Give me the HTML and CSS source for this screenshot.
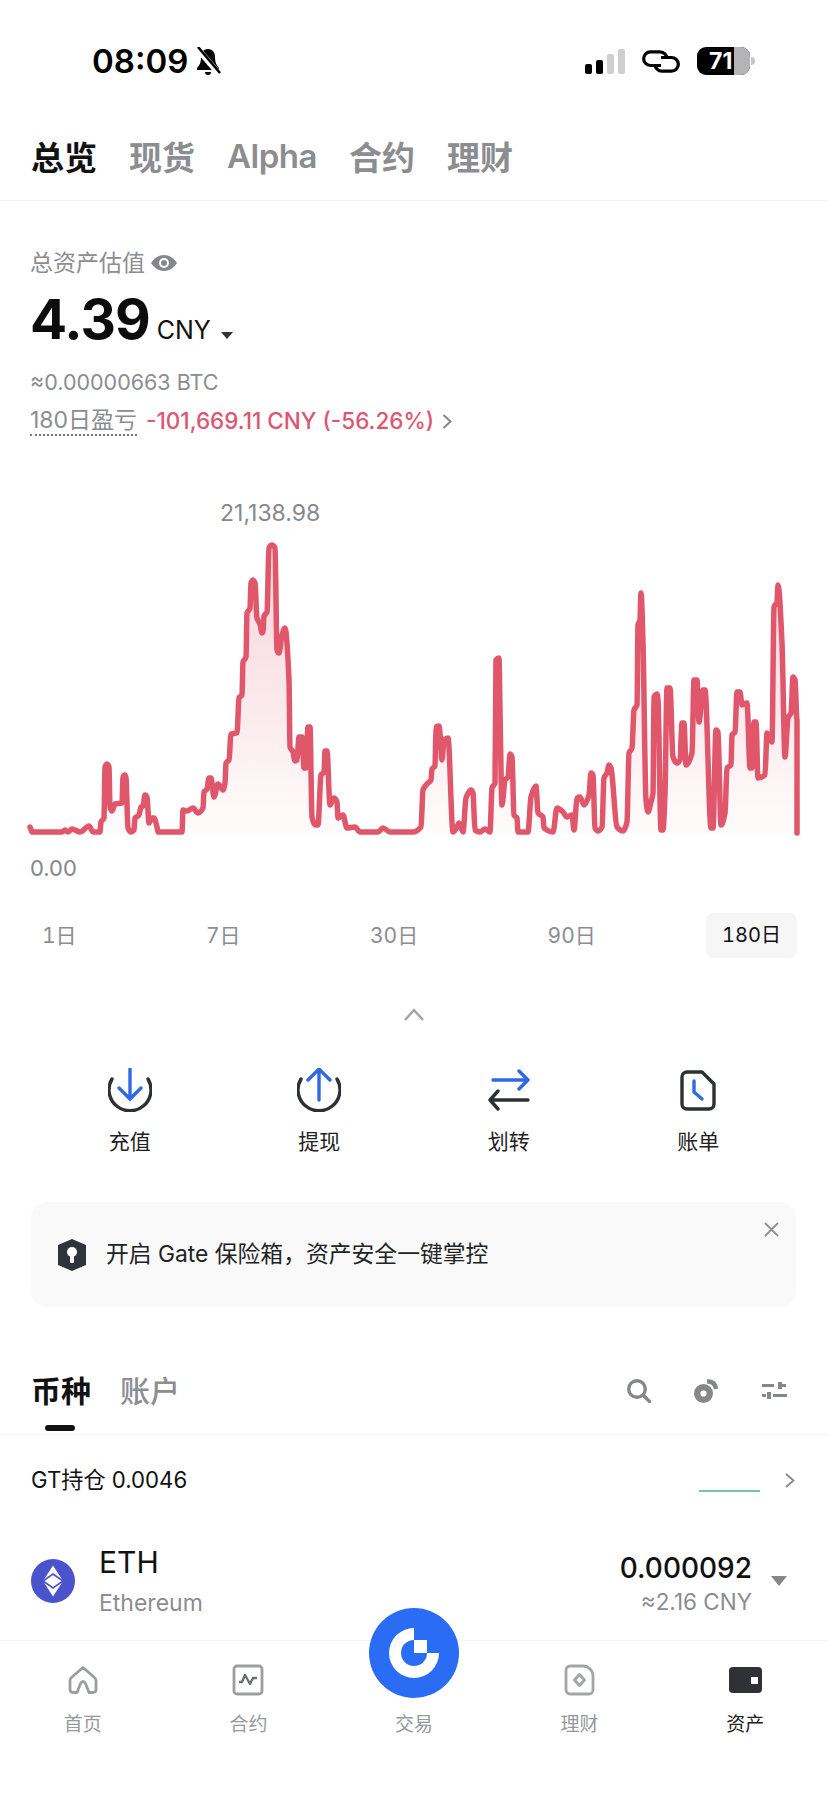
FILE: index.html
```html
<!DOCTYPE html>
<html lang="zh-CN">
  <head>
    <meta charset="UTF-8" />
    <meta name="viewport" content="width=device-width, initial-scale=1.0" />
    <title>资产</title>
    <link rel="stylesheet" href="styles.css">
  </head>
  <body>
    <div class="status">
      <span class="time">08:09</span>
      <svg class="bell" viewBox="0 0 26 28" width="26" height="28">
        <path d="M13 2c-5 0-7 4-7 8 0 5-1 8-4 11v2h22v-2c-3-3-4-6-4-11 0-4-2-8-7-8z" fill="#000"/>
        <path d="M10 25h6a3 3 0 0 1-6 0z" fill="#000"/>
        <path d="M2 1l22 26" stroke="#fff" stroke-width="6"/>
        <path d="M3 0l22 26" stroke="#000" stroke-width="2.6"/>
      </svg>
      <div class="status-right">
        <div class="signal">
          <i class="bar-1"></i><i class="bar-2"></i><i class="bar-3"></i><i class="bar-4"></i>
        </div>
        <svg class="link" viewBox="0 0 38 23" width="38" height="23" fill="none" stroke="#000" stroke-width="3.2">
          <path d="M19 15.500H8.500a6.800 6.800 0 0 1 0-13.700H18a7 7 0 0 1 7 7"/>
          <path d="M19 7.500h10.500a6.800 6.800 0 0 1 0 13.700H20a7 7 0 0 1-7-7"/>
        </svg>
        <div class="battery">
          <span class="battery-num">71</span>
          <i class="battery-rest"></i>
          <i class="battery-nub"></i>
        </div>
      </div>
    </div>

    <div class="tabs">
      <span class="active">总览</span>
      <span>现货</span>
      <span class="latin">Alpha</span>
      <span>合约</span>
      <span>理财</span>
    </div>

    <div class="summary">
      <div class="label">
        总资产估值
        <svg viewBox="0 0 26 16" width="26" height="16">
          <path d="M0 8c3-5 8-8 13-8s10 3 13 8c-3 5-8 8-13 8S3 13 0 8z" fill="#85878b"/>
          <circle cx="13" cy="8" r="5" fill="#fff"/>
          <circle cx="13" cy="8" r="3" fill="#85878b"/>
        </svg>
      </div>
      <div class="value">
        <b>4.39</b><span>CNY</span><i class="caret"></i>
      </div>
      <div class="btc">≈0.00000663 BTC</div>
      <div class="profit">
        <span class="profit-name">180日盈亏</span>
        <span class="profit-num">-101,669.11 CNY (-56.26%)</span>
        <svg viewBox="0 0 10 15" width="10" height="15" fill="none" stroke="#85878b" stroke-width="2">
          <path d="M1.500 1l7 6.500-7 6.500"/>
        </svg>
      </div>
    </div>

    <div class="chart-max">21,138.98</div>
    <svg class="chart" viewBox="0 528 828 310" width="828" height="310">
      <defs>
        <linearGradient id="area" gradientUnits="userSpaceOnUse" x1="0" y1="545" x2="0" y2="833">
          <stop offset="0" stop-color="#e0566a" stop-opacity="0.26"/>
          <stop offset="1" stop-color="#e0566a" stop-opacity="0.02"/>
        </linearGradient>
      </defs>
      <path class="area"></path>
      <path class="line"></path>
    </svg>
    <div class="chart-min">0.00</div>

    <div class="range">
      <span>1日</span>
      <span>7日</span>
      <span>30日</span>
      <span>90日</span>
      <span class="active">180日</span>
    </div>

    <svg class="fold" viewBox="0 0 20 13" width="20" height="13" fill="none" stroke="#a3a5a8" stroke-width="2.500">
      <path d="M1 12l9-10 9 10"/>
    </svg>

    <div class="actions">
      <div class="action">
        <svg viewBox="0 0 44 44" width="44" height="44" fill="none" stroke-width="3.400" stroke-linecap="round">
          <path d="M4 11a21 21 0 1 0 36 0" stroke="#2d3035"/>
          <path d="M22 1v30M11 20l11 11 11-11" stroke="#2f69e6"/>
        </svg>
        <span>充值</span>
      </div>
      <div class="action">
        <svg viewBox="0 0 44 44" width="44" height="44" fill="none" stroke-width="3.400" stroke-linecap="round">
          <path d="M4 11a21 21 0 1 0 36 0" stroke="#2d3035"/>
          <path d="M22 32V2M11 12L22 1l11 11" stroke="#2f69e6"/>
        </svg>
        <span>提现</span>
      </div>
      <div class="action">
        <svg viewBox="0 0 42 44" width="42" height="44" fill="none" stroke-width="3.400" stroke-linecap="round" stroke-linejoin="round">
          <path d="M5 12h35M31 3l9 9-9 9" stroke="#2f69e6"/>
          <path d="M40 32H2M10 23l-8 9 8 9" stroke="#2d3035"/>
        </svg>
        <span>划转</span>
      </div>
      <div class="action">
        <svg viewBox="0 0 38 44" width="38" height="44" fill="none" stroke-width="3.400" stroke-linecap="round" stroke-linejoin="round">
          <path d="M8 4h15l12 12v20a5 5 0 0 1-5 5H8a5 5 0 0 1-5-5V9a5 5 0 0 1 5-5z" stroke="#2d3035"/>
          <path d="M15 13v11l8 7" stroke="#2f69e6"/>
        </svg>
        <span>账单</span>
      </div>
    </div>

    <div class="notice">
      <svg viewBox="0 0 28 32" width="28" height="32">
        <path d="M14 0l14 6v20l-14 6-14-6V6z" fill="#30343a"/>
        <circle cx="14" cy="13" r="5" fill="#fff"/>
        <rect x="12" y="14" width="4" height="10" rx="1" fill="#fff"/>
      </svg>
      <span>开启 Gate 保险箱，资产安全一键掌控</span>
      <svg class="notice-close" viewBox="0 0 15 15" width="15" height="15" fill="none" stroke="#8f9195" stroke-width="1.800">
        <path d="M1 1l13 13M14 1L1 14"/>
      </svg>
    </div>

    <div class="section">
      <span class="section-tab active">币种</span>
      <span class="section-tab">账户</span>
      <div class="tools">
        <svg viewBox="0 0 24 24" width="24" height="24" fill="none" stroke="#85878b" stroke-width="3.400" stroke-linecap="round">
          <circle cx="10" cy="10" r="8.300"/>
          <path d="M16.500 16.500l6 6"/>
        </svg>
        <svg viewBox="0 0 25 24" width="25" height="24" fill="none">
          <circle cx="9.500" cy="14.500" r="6.300" stroke="#85878b" stroke-width="6.400"/>
          <path d="M13 2.500q8-.5 9 7.500" stroke="#85878b" stroke-width="4.400"/>
        </svg>
        <svg viewBox="0 0 26 18" width="26" height="18" fill="#85878b">
          <rect x="0" y="2" width="12" height="3"/>
          <rect x="16" y="0" width="4" height="7"/>
          <rect x="20" y="2" width="4" height="3"/>
          <rect x="0" y="12" width="4" height="3"/>
          <rect x="5" y="10" width="4" height="7"/>
          <rect x="11" y="12" width="14" height="3"/>
        </svg>
      </div>
    </div>

    <div class="gt-row">
      <span>GT持仓 0.0046</span>
      <i class="gt-line"></i>
      <svg viewBox="0 0 10 15" width="10" height="15" fill="none" stroke="#85878b" stroke-width="1.800">
        <path d="M1 1l7.500 6.500L1 14"/>
      </svg>
    </div>

    <div class="coin">
      <svg viewBox="0 0 44 44" width="44" height="44">
        <circle cx="22" cy="22" r="22" fill="#4a52cc"/>
        <path d="M22 6.500l10 15.500-10 15.500L12 22z" fill="#fff"/>
        <path d="M22 15l10 7-10 7-10-7z" fill="#fff" stroke="#4a52cc" stroke-width="1.600"/>
      </svg>
      <div class="coin-name">
        <b>ETH</b>
        <span>Ethereum</span>
      </div>
      <div class="coin-amount">
        <b>0.000092</b>
        <span>≈2.16 CNY</span>
      </div>
      <i class="coin-caret"></i>
    </div>

    <div class="nav">
      <div class="nav-item">
        <svg viewBox="0 0 30 29" width="30" height="29" fill="none" stroke="#9b9da0" stroke-width="2.800" stroke-linejoin="round">
          <path d="M15 2L26 11.500Q28 13 28 15V24Q28 27 25 27H21L17.500 18Q15 14 12.500 18L9 27H5Q2 27 2 24V15Q2 13 4 11.500Z"/>
        </svg>
        <span>首页</span>
      </div>
      <div class="nav-item">
        <svg viewBox="0 0 32 32" width="32" height="32" fill="none" stroke="#9b9da0" stroke-width="2.800" stroke-linejoin="round">
          <rect x="2" y="2" width="28" height="28" rx="3"/>
          <path d="M7 18h3l3-7 5 9 3-6h4" stroke="#6d6f73" stroke-width="2.400"/>
        </svg>
        <span>合约</span>
      </div>
      <div class="nav-item">
        <div class="trade">
          <svg viewBox="0 0 50 50" width="50" height="50" fill="#fff">
            <path d="M25 0A25 25 0 1 0 50 25H38A13 13 0 1 1 25 12z"/>
            <rect x="25" y="12" width="13" height="13"/>
          </svg>
        </div>
        <i class="nav-space"></i>
        <span>交易</span>
      </div>
      <div class="nav-item">
        <svg viewBox="0 0 32 32" width="32" height="32" fill="none" stroke="#a3a5a8" stroke-width="2.800" stroke-linejoin="round">
          <path d="M6 2h13a10 10 0 0 1 10 10v14a4 4 0 0 1-4 4H6a4 4 0 0 1-4-4V6a4 4 0 0 1 4-4z"/>
          <path d="M15.500 10.500l5 5.500-5 5.500-5-5.500z" stroke-width="3"/>
        </svg>
        <span>理财</span>
      </div>
      <div class="nav-item active">
        <svg viewBox="0 0 33 28" width="33" height="28">
          <rect x="0" y="1" width="33" height="26" rx="4" fill="#2f3136"/>
          <rect x="22" y="11" width="7" height="7" fill="#fff"/>
        </svg>
        <span>资产</span>
      </div>
    </div>
    <script src="chart.js"></script>
  </body>
</html>
```

FILE: styles.css
```css
* {
  padding: 0;
  margin: 0;
  box-sizing: border-box;
}
body {
  position: relative;
  width: 828px;
  height: 1800px;
  overflow: hidden;
  background: white;
  color: #111;
  font-family: Inter, "Noto Sans CJK SC", sans-serif;
}
i {
  display: block;
}
svg {
  display: block;
  flex-shrink: 0;
}

/* status bar */
.status {
  height: 122px;
  padding: 0 78px 0 92px;
  display: flex;
  align-items: center;
}
.time {
  font-size: 33px;
  font-weight: 600;
  color: black;
}
.bell {
  margin-left: 7px;
}
.status-right {
  margin-left: auto;
  display: flex;
  align-items: center;
}
.signal {
  display: flex;
  align-items: flex-end;
  gap: 4px;
  height: 25px;
}
.signal i {
  width: 7px;
  border-radius: 2px;
  background: black;
}
.signal .bar-1 {
  height: 10px;
}
.signal .bar-2 {
  height: 14px;
}
.signal .bar-3 {
  height: 20px;
  background: #cfcfd1;
}
.signal .bar-4 {
  height: 25px;
  background: #cfcfd1;
}
.link {
  margin-left: 17px;
}
.battery {
  position: relative;
  width: 53px;
  height: 28px;
  margin-left: 17px;
  border-radius: 9px;
  overflow: visible;
  background: black;
}
.battery-num {
  position: absolute;
  left: 12px;
  top: 0;
  line-height: 28px;
  font-size: 23px;
  font-weight: 700;
  color: white;
}
.battery-rest {
  position: absolute;
  right: 0;
  top: 0;
  width: 16px;
  height: 28px;
  border-radius: 0 9px 9px 0;
  background: #b4b4b6;
}
.battery-nub {
  position: absolute;
  right: -5px;
  top: 10px;
  width: 4px;
  height: 8px;
  border-radius: 0 4px 4px 0;
  background: #c4c4c6;
}

/* top tabs */
.tabs {
  height: 79px;
  padding: 0 31px 10px;
  display: flex;
  align-items: center;
  gap: 32px;
  border-bottom: 1px solid #f3f3f4;
  font-size: 33px;
  font-weight: 600;
  color: #8b8d91;
}
.tabs .latin {
  letter-spacing: -0.5px;
}
.tabs .active {
  font-weight: 700;
  color: #111;
}

/* total assets */
.summary {
  padding: 47px 30px 0;
}
.label {
  display: flex;
  align-items: center;
  gap: 6px;
  line-height: 30px;
  font-size: 23px;
  color: #8b8d91;
}
.value {
  display: flex;
  align-items: baseline;
  height: 60px;
  margin-top: 11px;
  line-height: 60px;
}
.value b {
  font-size: 55px;
  font-weight: 700;
  letter-spacing: -1px;
  color: #0c0c0c;
}
.value span {
  margin-left: 7px;
  font-size: 25px;
  color: #111;
}
.caret {
  width: 0;
  height: 0;
  margin: 0 0 10px 10px;
  border: 6px solid transparent;
  border-top: 7px solid #333;
  border-bottom: 0;
}
.btc {
  margin-top: 18px;
  line-height: 30px;
  font-size: 21.5px;
  color: #8b8d91;
}
.profit {
  display: flex;
  align-items: center;
  margin-top: 9px;
  line-height: 30px;
  font-size: 23px;
}
.profit-name {
  color: #8b8d91;
  line-height: 27px;
  border-bottom: 2px dotted #77797d;
}
.profit-num {
  margin-left: 9px;
  font-size: 22.5px;
  font-weight: 500;
  color: #dd5672;
}
.profit svg {
  margin-left: 8px;
}

/* chart */
.chart-max {
  margin-top: 62px;
  padding-left: 220px;
  line-height: 30px;
  font-size: 23px;
  color: #85878b;
}
.chart .area {
  fill: url(#area);
}
.chart .line {
  fill: none;
  stroke: #e0566a;
  stroke-width: 5.5;
  stroke-linejoin: round;
  stroke-linecap: round;
}
.chart-min {
  margin-top: 15px;
  padding-left: 30px;
  line-height: 30px;
  font-size: 22px;
  color: #85878b;
}
.range {
  height: 45px;
  margin: 30px 31px 0 23px;
  display: flex;
  justify-content: space-between;
  align-items: center;
  font-size: 21px;
  font-variant-numeric: tabular-nums;
  color: #8b8d91;
}
.range span {
  padding: 0 19px;
  line-height: 45px;
}
.range .active {
  padding: 0 16px;
  border-radius: 8px;
  background: #f6f6f7;
  font-size: 20px;
  color: #111;
}
.fold {
  margin: 50px auto 0;
}

/* shortcuts */
.actions {
  margin-top: 47px;
  padding: 0 35px;
  display: grid;
  grid-template-columns: repeat(4, 1fr);
}
.action {
  display: flex;
  flex-direction: column;
  align-items: center;
  gap: 15px;
}
.action span {
  line-height: 30px;
  font-size: 21px;
  color: #222;
}

/* notice */
.notice {
  position: relative;
  height: 105px;
  margin: 45px 32px 0 31px;
  padding-left: 27px;
  display: flex;
  align-items: center;
  gap: 20px;
  border-radius: 16px;
  background: #f9f9fa;
  font-size: 22.8px;
  color: #222;
}
.notice span {
  padding-bottom: 5px;
}
.notice-close {
  position: absolute;
  right: 17px;
  top: 20px;
}

/* assets list */
.section {
  height: 65px;
  margin-top: 63px;
  padding: 0 40px 22px 31px;
  display: flex;
  align-items: center;
  gap: 29px;
  border-bottom: 1px solid #f5f5f6;
}
.section-tab {
  position: relative;
  font-size: 30px;
  line-height: 40px;
  font-weight: 500;
  color: #8b8d91;
}
.section-tab.active {
  font-weight: 700;
  color: #111;
}
.section-tab.active::after {
  content: "";
  position: absolute;
  left: 14px;
  bottom: -20px;
  width: 30px;
  height: 6px;
  border-radius: 3px;
  background: #111;
}
.tools {
  margin-left: auto;
  display: flex;
  align-items: center;
  gap: 43px;
}
.gt-row {
  height: 90px;
  padding: 0 33px 0 31px;
  display: flex;
  align-items: center;
  font-size: 22.2px;
  color: #111;
}
.gt-row span {
  margin-bottom: 4px;
}
.gt-line {
  width: 61px;
  height: 2px;
  margin: 22px 25px 0 auto;
  background: #74c6aa;
}
.coin {
  height: 112px;
  padding: 0 41px 0 31px;
  display: flex;
  align-items: center;
}
.coin-name {
  margin: 3px 0 0 24px;
}
.coin-name b {
  display: block;
  line-height: 36px;
  font-size: 30px;
  font-weight: 400;
  color: #111;
}
.coin-name span {
  display: block;
  margin-top: 5px;
  line-height: 36px;
  font-size: 23px;
  color: #8b8d91;
}
.coin-amount {
  margin: 7px 0 0 auto;
  text-align: right;
}
.coin-amount b {
  display: block;
  line-height: 34px;
  font-size: 28px;
  font-weight: 500;
  color: #111;
}
.coin-amount span {
  display: block;
  line-height: 34px;
  font-size: 22.5px;
  color: #8b8d91;
}
.coin-caret {
  width: 0;
  height: 0;
  margin-left: 19px;
  border: 8px solid transparent;
  border-top: 10px solid #85878b;
  border-bottom: 0;
}

/* bottom nav */
.nav {
  position: absolute;
  left: 0;
  bottom: 0;
  width: 828px;
  height: 160px;
  padding-top: 23px;
  display: grid;
  grid-template-columns: repeat(5, 1fr);
  border-top: 1px solid #f5f5f6;
  background: white;
}
.nav-item {
  position: relative;
  display: flex;
  flex-direction: column;
  align-items: center;
  font-size: 19px;
  color: #97999c;
}
.nav-item svg {
  height: 32px;
}
.nav-item span {
  margin-top: 17px;
  line-height: 24px;
}
.nav-item.active span {
  color: #222;
}
.nav-space {
  height: 32px;
}
.trade {
  position: absolute;
  left: 50%;
  top: -56px;
  width: 90px;
  height: 90px;
  margin-left: -45px;
  display: flex;
  align-items: center;
  justify-content: center;
  border-radius: 50%;
  background: #2a6df4;
}
.trade svg {
  height: 50px;
}
```

FILE: chart.js
```js
var points = [
  [30,827],[32,832],[62,832],[65,830],[68,832],[72,829],[80,832],[89,826],[93,832],[100,832],
  [101,822],[104,818],[105,767],[107,764],[109,767],[110,807],[112,811],[115,804],[122,803],[123,777],
  [125,775],[126,778],[128,828],[131,832],[134,830],[135,818],[139,815],[141,807],[143,806],[145,795],
  [147,797],[149,823],[152,818],[154,818],[157,827],[158,832],[182,832],[183,810],[187,811],[193,808],
  [198,813],[203,808],[204,792],[207,789],[209,778],[211,778],[214,797],[218,784],[223,790],[225,783],
  [226,763],[229,760],[231,734],[237,733],[239,698],[242,695],[243,662],[246,657],[247,613],[250,608],
  [251,583],[253,580],[255,583],[257,618],[260,624],[262,633],[263,632],[264,616],[267,612],[269,548],
  [272,545],[275,548],[277,650],[279,653],[282,635],[285,628],[289,680],[290,747],[293,752],[295,761],
  [297,760],[299,737],[302,737],[304,768],[306,768],[308,727],[310,727],[312,817],[315,825],[318,825],
  [321,775],[324,772],[325,751],[327,751],[330,805],[334,798],[337,802],[338,818],[343,815],[347,828],
  [355,827],[360,832],[378,832],[383,828],[390,832],[413,832],[421,827],[423,790],[427,784],[431,780],
  [432,769],[435,766],[436,727],[439,726],[440,733],[442,760],[444,740],[448,738],[453,832],[457,827],
  [459,823],[463,832],[466,798],[471,790],[473,793],[475,830],[480,832],[485,829],[490,832],[492,788],
  [495,783],[496,660],[499,658],[500,710],[502,805],[505,780],[508,777],[510,754],[512,757],[514,815],
  [517,818],[518,832],[528,832],[531,797],[536,786],[538,813],[543,817],[544,828],[553,832],[557,808],
  [563,812],[567,817],[572,815],[574,830],[577,798],[580,797],[584,805],[589,795],[591,773],[593,775],
  [595,828],[598,831],[602,827],[604,778],[607,773],[609,765],[611,768],[617,827],[623,831],[627,822],
  [629,753],[632,748],[634,710],[637,705],[638,625],[640,620],[641,593],[643,643],[646,800],[648,812],
  [651,802],[653,793],[654,697],[657,694],[658,700],[661,830],[663,830],[665,793],[667,688],[670,688],
  [673,757],[677,763],[680,760],[682,723],[684,723],[686,765],[692,753],[694,680],[697,680],[699,722],
  [703,690],[705,690],[711,828],[713,828],[716,730],[718,732],[721,825],[725,813],[727,768],[731,765],
  [732,735],[735,732],[737,692],[740,692],[742,705],[747,703],[750,768],[752,768],[754,722],[756,722],
  [758,778],[765,775],[767,733],[772,742],[774,607],[777,602],[778,585],[782,643],[785,757],[788,718],
  [791,713],[793,677],[795,680],[797,720],[797,833]
];

/* 单调曲线，避免过冲 */
function slope(a, b) {
  return b[0] === a[0] ? 0 : (b[1] - a[1]) / (b[0] - a[0]);
}
function tangent(i) {
  if (i === 0 || i === points.length - 1) return 0;
  var s0 = slope(points[i - 1], points[i]);
  var s1 = slope(points[i], points[i + 1]);
  if (s0 * s1 <= 0) return 0;
  return (2 * s0 * s1) / (s0 + s1);
}
var d = "M" + points[0][0] + " " + points[0][1];
for (var i = 1; i < points.length; i++) {
  var a = points[i - 1];
  var b = points[i];
  var dx = (b[0] - a[0]) / 3;
  if (dx === 0) {
    d += "L" + b[0] + " " + b[1];
    continue;
  }
  d += "C" + (a[0] + dx) + " " + (a[1] + tangent(i - 1) * dx) + " " +
    (b[0] - dx) + " " + (b[1] - tangent(i) * dx) + " " + b[0] + " " + b[1];
}
document.querySelector(".chart .line").setAttribute("d", d);
document.querySelector(".chart .area").setAttribute("d", d + "L30 833Z");
```
